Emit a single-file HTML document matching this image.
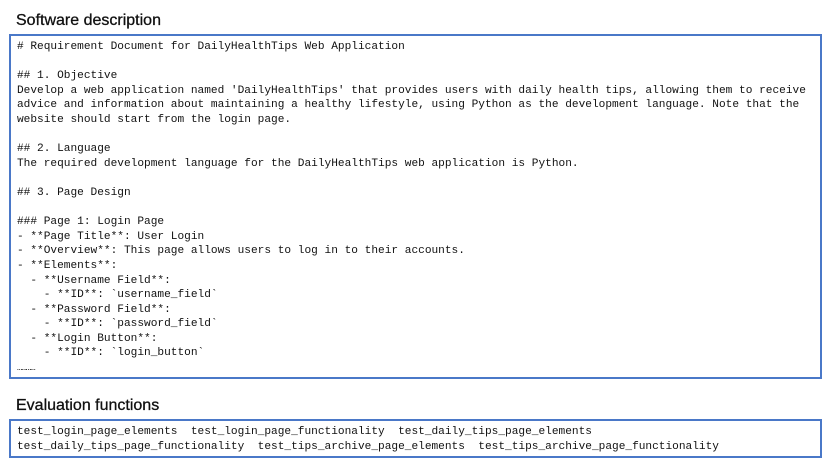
<!DOCTYPE html>
<html><head><style>
body{margin:0;width:830px;height:467px;background:#fff;position:relative;font-family:"Liberation Sans",sans-serif;}
.h{position:absolute;left:16px;font-size:16px;color:#111;-webkit-text-stroke:0.3px #111;}
.box{position:absolute;left:9px;width:809px;border:2px solid #4a78c8;box-sizing:content-box;}
pre{margin:0;font-family:"Liberation Mono",monospace;font-size:11.15px;line-height:14.6px;color:#111;position:absolute;left:6px;}
</style></head><body>
<div class="h" style="top:12px">Software description</div>
<div class="box" style="top:34px;height:341px">
<pre style="top:4px"># Requirement Document for DailyHealthTips Web Application

## 1. Objective
Develop a web application named 'DailyHealthTips' that provides users with daily health tips, allowing them to receive
advice and information about maintaining a healthy lifestyle, using Python as the development language. Note that the
website should start from the login page.

## 2. Language
The required development language for the DailyHealthTips web application is Python.

## 3. Page Design

### Page 1: Login Page
- **Page Title**: User Login
- **Overview**: This page allows users to log in to their accounts.
- **Elements**:
  - **Username Field**:
    - **ID**: `username_field`
  - **Password Field**:
    - **ID**: `password_field`
  - **Login Button**:
    - **ID**: `login_button`
<span style="font-size:9px;letter-spacing:-1px">…………</span></pre>
</div>
<div class="h" style="top:397px">Evaluation functions</div>
<div class="box" style="top:419px;height:35px">
<pre style="top:4px">test_login_page_elements  test_login_page_functionality  test_daily_tips_page_elements
test_daily_tips_page_functionality  test_tips_archive_page_elements  test_tips_archive_page_functionality</pre>
</div>
</body></html>
